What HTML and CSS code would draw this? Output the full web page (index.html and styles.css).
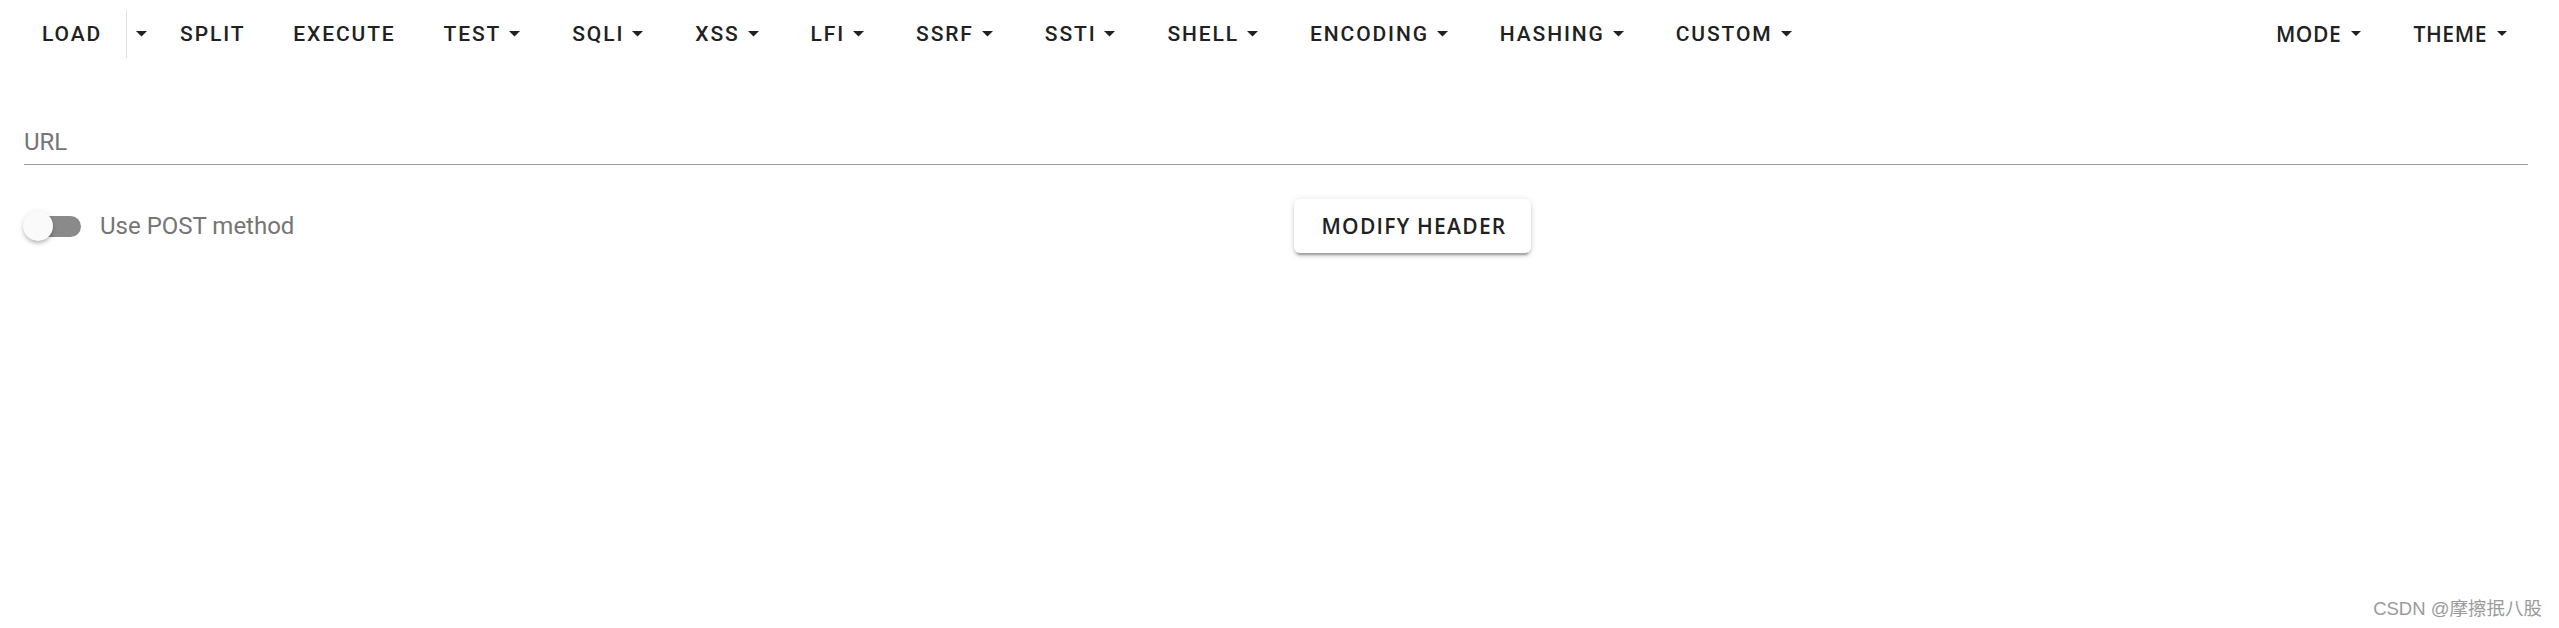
FILE: index.html
```html
<!DOCTYPE html>
<html lang="en">
<head>
<meta charset="utf-8">
<title>HackBar</title>
<link rel="stylesheet" href="styles.css">
</head>
<body>
<div class="app">
  <header class="toolbar">
    <div class="nav-left">
      <button class="btn">LOAD</button>
      <span class="divider"></span>
      <button class="btn btn-arrow-only"><svg class="caret" viewBox="0 0 11 6"><path d="M0 0H11L5.5 5.5Z"/></svg></button>
      <button class="btn">SPLIT</button>
      <button class="btn">EXECUTE</button>
      <button class="btn">TEST<svg class="caret" viewBox="0 0 11 6"><path d="M0 0H11L5.5 5.5Z"/></svg></button>
      <button class="btn">SQLI<svg class="caret" viewBox="0 0 11 6"><path d="M0 0H11L5.5 5.5Z"/></svg></button>
      <button class="btn">XSS<svg class="caret" viewBox="0 0 11 6"><path d="M0 0H11L5.5 5.5Z"/></svg></button>
      <button class="btn">LFI<svg class="caret" viewBox="0 0 11 6"><path d="M0 0H11L5.5 5.5Z"/></svg></button>
      <button class="btn">SSRF<svg class="caret" viewBox="0 0 11 6"><path d="M0 0H11L5.5 5.5Z"/></svg></button>
      <button class="btn">SSTI<svg class="caret" viewBox="0 0 11 6"><path d="M0 0H11L5.5 5.5Z"/></svg></button>
      <button class="btn">SHELL<svg class="caret" viewBox="0 0 11 6"><path d="M0 0H11L5.5 5.5Z"/></svg></button>
      <button class="btn">ENCODING<svg class="caret" viewBox="0 0 11 6"><path d="M0 0H11L5.5 5.5Z"/></svg></button>
      <button class="btn">HASHING<svg class="caret" viewBox="0 0 11 6"><path d="M0 0H11L5.5 5.5Z"/></svg></button>
      <button class="btn">CUSTOM<svg class="caret" viewBox="0 0 11 6"><path d="M0 0H11L5.5 5.5Z"/></svg></button>
    </div>
    <div class="nav-right">
      <button class="btn btn-alt">MODE<svg class="caret" viewBox="0 0 11 6"><path d="M0 0H11L5.5 5.5Z"/></svg></button>
      <button class="btn btn-alt">THEME<svg class="caret" viewBox="0 0 11 6"><path d="M0 0H11L5.5 5.5Z"/></svg></button>
    </div>
  </header>

  <main class="content">
    <div class="field">
      <span class="field-label">URL</span>
    </div>
    <div class="options">
      <label class="switch">
        <span class="switch-control">
          <span class="switch-track"></span>
          <span class="switch-thumb"></span>
        </span>
        <span class="switch-label">Use POST method</span>
      </label>
      <div class="options-right">
        <button class="raised">MODIFY HEADER</button>
      </div>
    </div>
  </main>

  <div class="watermark">CSDN @摩擦抿八股</div>
</div>
</body>
</html>
```

FILE: styles.css
```css
html, body {
  margin: 0;
  padding: 0;
  background: #ffffff;
}

body {
  font-family: Roboto, "Liberation Sans", sans-serif;
  color: rgba(0, 0, 0, 0.87);
  width: 2559px;
  height: 628px;
  overflow: hidden;
}

.app {
  position: relative;
  height: 628px;
}

.toolbar {
  display: flex;
  justify-content: space-between;
  align-items: center;
  height: 66px;
  padding: 1px 24px 0 18px;
}

.nav-left,
.nav-right {
  display: flex;
  align-items: center;
}

.btn {
  display: inline-flex;
  align-items: center;
  height: 54px;
  padding: 0 24px;
  border: 0;
  background: transparent;
  font-family: Roboto, "Liberation Sans", sans-serif;
  font-weight: 500;
  font-size: 21px;
  letter-spacing: 0.0892857em;
  color: #212121;
  cursor: pointer;
  white-space: nowrap;
}

.btn-arrow-only {
  padding: 0 9px;
}

.btn-arrow-only .caret {
  margin: 0;
}

.caret {
  width: 11px;
  height: 6px;
  margin-left: 8px;
  margin-right: 4px;
  fill: #212121;
}

.btn-alt {
  font-family: "Open Sans", "Liberation Sans", sans-serif;
  font-weight: 600;
  letter-spacing: 0.03em;
}

.btn-alt .caret {
  width: 10px;
  height: 5.5px;
  margin-left: 10px;
}

.divider {
  width: 1px;
  height: 48px;
  background: #e0e0e0;
}

.content {
  padding: 0 24px;
}

.field {
  margin-top: 57px;
  margin-right: 7px;
  padding-bottom: 4px;
  border-bottom: 1.5px solid #9a9a9a;
}

.field-label {
  display: block;
  font-size: 24px;
  line-height: 36px;
  color: #757575;
}

.options {
  display: grid;
  grid-template-columns: 1fr 1fr;
  align-items: center;
  margin-top: 34px;
}

.switch {
  display: flex;
  align-items: center;
  gap: 19px;
}

.switch-control {
  position: relative;
  width: 57px;
  height: 36px;
  flex: none;
}

.switch-track {
  position: absolute;
  left: 3px;
  top: 8px;
  width: 54px;
  height: 21px;
  border-radius: 11px;
  background: #8a8a8a;
}

.switch-thumb {
  position: absolute;
  left: -1px;
  top: 3px;
  width: 30px;
  height: 30px;
  border-radius: 50%;
  background: #fafafa;
  box-shadow: 0 3px 1.5px -3px rgba(0, 0, 0, 0.2), 0 3px 3px 0 rgba(0, 0, 0, 0.14), 0 1.5px 7px 0 rgba(0, 0, 0, 0.12);
}

.switch-label {
  font-size: 24px;
  line-height: 36px;
  color: #757575;
}

.options-right {
  padding-left: 14px;
}

.raised {
  height: 54px;
  padding: 0 24px 0 28px;
  border: 0;
  border-radius: 6px;
  background: #ffffff;
  box-shadow: 0 4.5px 1.5px -3px rgba(0, 0, 0, 0.2), 0 3px 3px 0 rgba(0, 0, 0, 0.14), 0 1.5px 7.5px 0 rgba(0, 0, 0, 0.12);
  font-family: "Open Sans", "Liberation Sans", sans-serif;
  font-weight: 600;
  font-size: 21px;
  letter-spacing: 0.06em;
  color: #212121;
  cursor: pointer;
}

.watermark {
  position: absolute;
  right: 17px;
  top: 597px;
  font-family: "Liberation Sans", "Noto Sans CJK SC", sans-serif;
  font-size: 18.5px;
  line-height: 24px;
  color: #9a9a9a;
  text-shadow: 0 0 1px #ffffff;
}
```
